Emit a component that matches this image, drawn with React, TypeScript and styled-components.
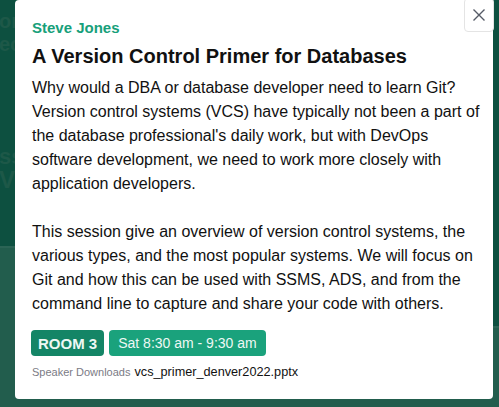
import React from "react";
import styled, { createGlobalStyle } from "styled-components";

const Global = createGlobalStyle`
  html, body { margin: 0; padding: 0; }
  body {
    width: 499px;
    height: 407px;
    overflow: hidden;
    background: #0d5040;
    font-family: "Liberation Sans", Arial, sans-serif;
  }
`;

const Page = styled.div`
  display: grid;
  grid-template-columns: 250px 249px;
  height: 407px;
`;

const BgColumn = styled.div<{ $split: number }>`
  display: grid;
  grid-template-rows: ${(p) => p.$split}px 1fr;
`;

const BgCard = styled.div<{ $light?: boolean }>`
  background: ${(p) => (p.$light ? "#225d4d" : "#0d5040")};
  border-top: ${(p) => (p.$light ? "2px solid #2b6455" : "none")};
  padding: 10px 0 0 0;
  display: flex;
  flex-direction: column;
  color: #1d5848;
  font-weight: 700;
`;

const BgLine = styled.div<{ $size: number; $top?: number }>`
  font-size: ${(p) => p.$size}px;
  line-height: 23px;
  margin-top: ${(p) => p.$top ?? 0}px;
  margin-left: -1px;
  white-space: nowrap;
`;

const Overlay = styled.div`
  position: fixed;
  inset: 0;
  display: flex;
  align-items: flex-start;
  padding-left: 15px;
`;

const Modal = styled.div`
  position: relative;
  width: 478px;
  height: 399px;
  box-sizing: border-box;
  background: #ffffff;
  border-radius: 4px;
  padding: 19px 10px 0 17px;
  display: flex;
  flex-direction: column;
`;

const Close = styled.button`
  position: absolute;
  top: -2px;
  right: -1px;
  width: 30px;
  height: 34px;
  box-sizing: border-box;
  border: 1px solid #e4e4e4;
  border-radius: 4px;
  background: #ffffff;
  display: flex;
  align-items: center;
  justify-content: center;
  padding: 0;
  cursor: pointer;
`;

const Speaker = styled.div`
  color: #17a07a;
  font-weight: 700;
  font-size: 15px;
  line-height: 18px;
`;

const Title = styled.h2`
  margin: 6px 0 0 0;
  font-size: 20px;
  line-height: 26px;
  font-weight: 700;
  color: #111111;
`;

const Body = styled.p`
  margin: 7px 0 0 0;
  font-size: 16px;
  line-height: 24px;
  color: #111111;
  white-space: pre-line;
`;

const Badges = styled.div`
  display: flex;
  gap: 5px;
  margin-top: 14px;
  margin-left: -1px;
`;

const Badge = styled.span<{ $dark?: boolean }>`
  display: inline-flex;
  align-items: center;
  height: 26px;
  padding: 0 ${(p) => (p.$dark ? 7 : 9)}px;
  border-radius: 4px;
  background: ${(p) => (p.$dark ? "#148566" : "#1aa27c")};
  color: #eef8f4;
  font-size: ${(p) => (p.$dark ? 15 : 14)}px;
  font-weight: ${(p) => (p.$dark ? 700 : 400)};
`;

const Downloads = styled.div`
  margin-top: 9px;
  display: flex;
  align-items: baseline;
  gap: 4px;
`;

const DlLabel = styled.span`
  font-size: 11px;
  color: #7b7b85;
`;

const DlFile = styled.span`
  font-size: 12.7px;
  color: #111111;
`;

export default function App() {
  return (
    <>
      <Global />
      <Page>
        <BgColumn $split={246}>
          <BgCard>
            <BgLine $size={20}>on</BgLine>
            <BgLine $size={20}>ec</BgLine>
            <BgLine $size={22} $top={89}>ss</BgLine>
            <BgLine $size={24}>V</BgLine>
          </BgCard>
          <BgCard $light />
        </BgColumn>
        <BgColumn $split={326}>
          <BgCard />
          <BgCard $light />
        </BgColumn>
      </Page>
      <Overlay>
        <Modal>
          <Close aria-label="Close">
            <svg width="14" height="14" viewBox="0 0 14 14">
              <path d="M1.5 1.5 L12.5 12.5 M12.5 1.5 L1.5 12.5" stroke="#555a66" strokeWidth="1.4" fill="none" />
            </svg>
          </Close>
          <Speaker>Steve Jones</Speaker>
          <Title>A Version Control Primer for Databases</Title>
          <Body>
            {"Why would a DBA or database developer need to learn Git? Version control systems (VCS) have typically not been a part of the database professional's daily work, but with DevOps software development, we need to work more closely with application developers.\n\nThis session give an overview of version control systems, the various types, and the most popular systems. We will focus on Git and how this can be used with SSMS, ADS, and from the command line to capture and share your code with others."}
          </Body>
          <Badges>
            <Badge $dark>ROOM 3</Badge>
            <Badge>Sat 8:30 am - 9:30 am</Badge>
          </Badges>
          <Downloads>
            <DlLabel>Speaker Downloads</DlLabel>
            <DlFile>vcs_primer_denver2022.pptx</DlFile>
          </Downloads>
        </Modal>
      </Overlay>
    </>
  );
}
